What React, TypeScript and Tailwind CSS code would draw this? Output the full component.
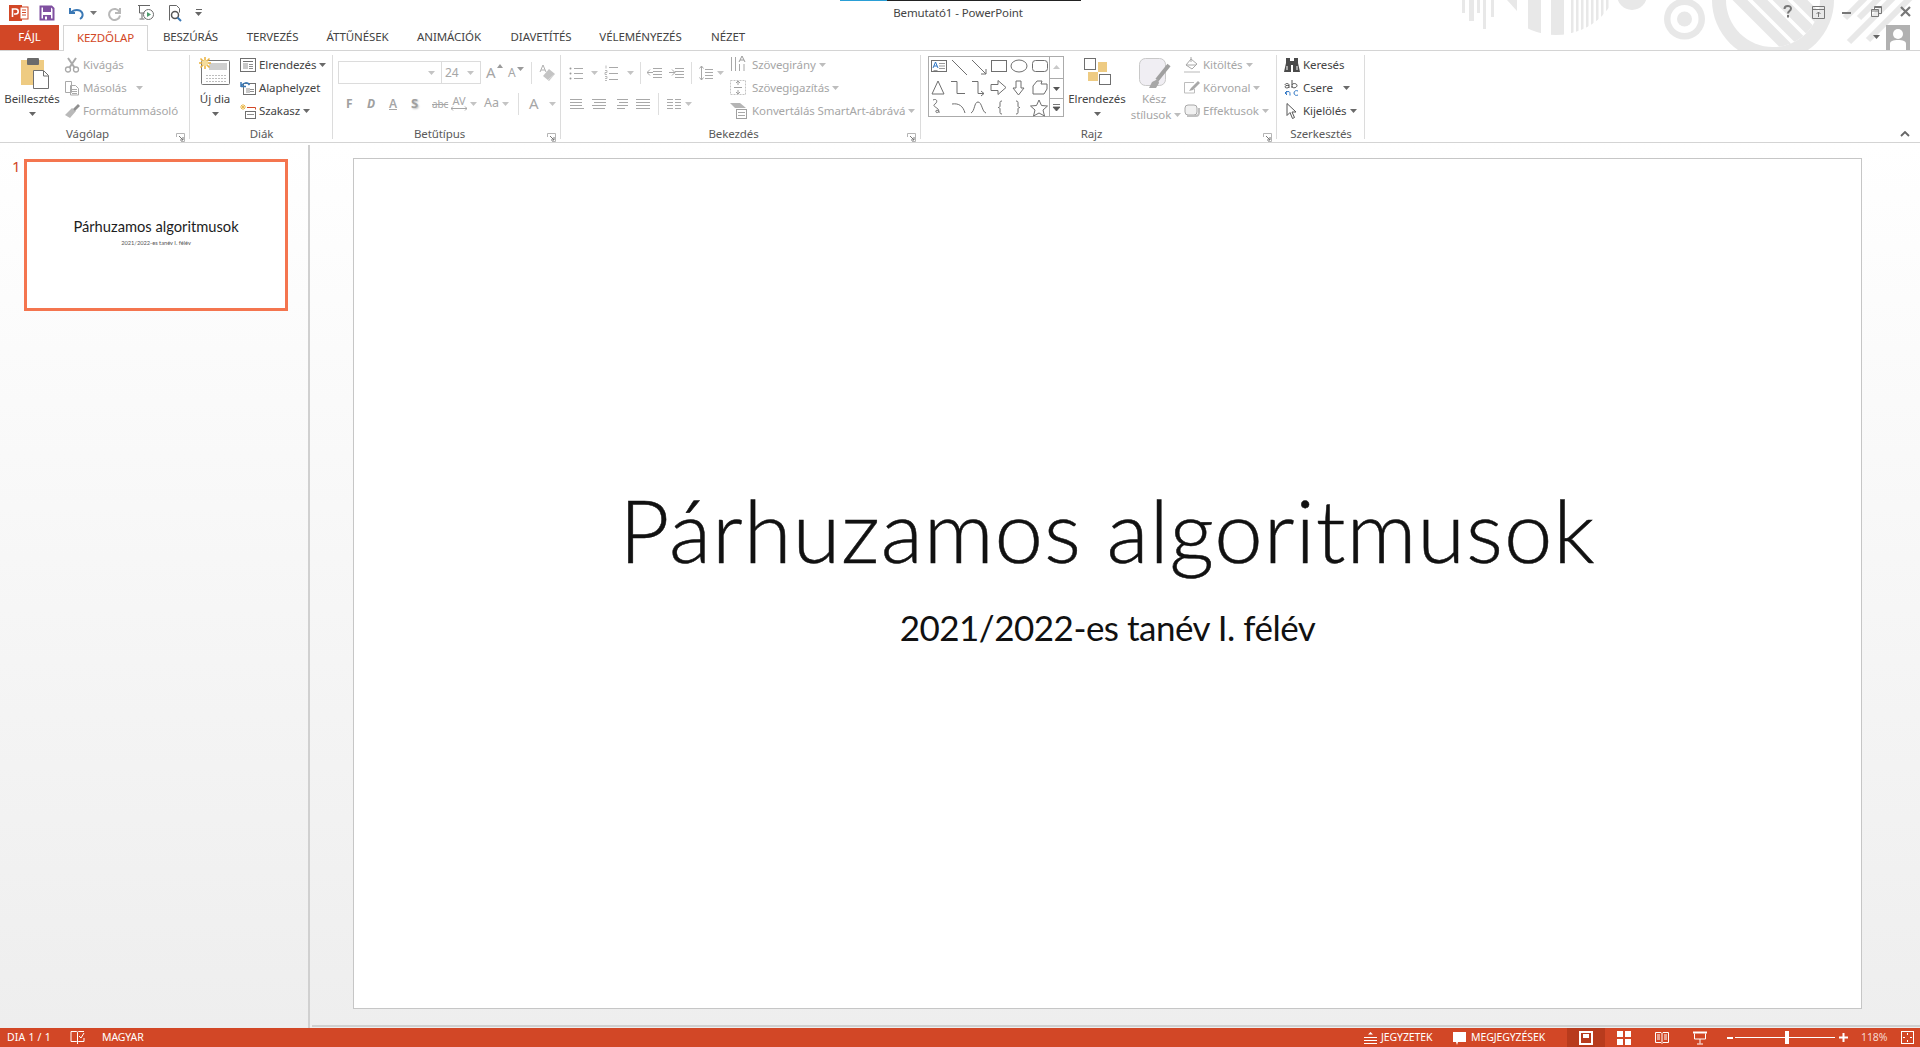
import type { ReactNode } from "react";

const GREY = "#a9a9a9";

function Caret({ color = "#8a8a8a" }: { color?: string }) {
  return (
    <svg width="7" height="4" viewBox="0 0 7 4" className="shrink-0">
      <path d="M0 0h7L3.5 4z" fill={color} />
    </svg>
  );
}

function Ico({ w = 16, h = 16, children }: { w?: number; h?: number; children: ReactNode }) {
  return (
    <svg width={w} height={h} viewBox={`0 0 ${w} ${h}`} fill="none" className="shrink-0">
      {children}
    </svg>
  );
}

function Row({
  icon,
  label,
  off,
  caret,
  gap = "w-[19px]",
  caretGap = "ml-[3px]",
}: {
  icon: ReactNode;
  label: string;
  off?: boolean;
  caret?: boolean;
  gap?: string;
  caretGap?: string;
}) {
  return (
    <div className={`flex h-[23px] items-center whitespace-nowrap ${off ? "text-[#a6a6a6]" : "text-[#444444]"}`}>
      <div className={`flex items-center shrink-0 ${gap}`}>{icon}</div>
      <span>{label}</span>
      {caret && <span className={caretGap}><Caret color={off ? "#bdbdbd" : "#6a6a6a"} /></span>}
    </div>
  );
}

function Launcher() {
  return (
    <svg width="9" height="9" viewBox="0 0 9 9" className="absolute right-[5px] bottom-[2px]">
      <path d="M.5 4V.5H8.5V8.5H5" stroke="#b5b5b5" fill="none" />
      <path d="M3 3l4 4M7 4v3H4" stroke="#777" fill="none" />
    </svg>
  );
}

function Group({ width, label, launcher, children }: { width: string; label: string; launcher?: boolean; children: ReactNode }) {
  return (
    <div className={`relative flex h-[93px] shrink-0 flex-col ${width}`}>
      <div className="flex h-[73px] pt-[2px]">{children}</div>
      <div className={`flex h-[19px] items-center justify-center text-[#5a5a5a] ${launcher ? "pr-[15px]" : ""}`}>{label}</div>
      {launcher && <Launcher />}
      <div className="absolute right-0 top-[4px] h-[84px] w-px bg-[#dcdcdc]" />
    </div>
  );
}

function Sep({ h = "h-[22px]" }: { h?: string }) {
  return <div className={`w-px bg-[#dedede] ${h}`} />;
}

function PaperLines({ x, w, ys, color = GREY }: { x: number; w: number; ys: number[]; color?: string }) {
  return <path d={ys.map((y) => `M${x} ${y}.5h${w}`).join("")} stroke={color} />;
}

function TitleDoodle() {
  const stripes = [1571, 1576, 1581, 1586, 1591, 1596, 1601, 1606];
  return (
    <svg width="1920" height="50" viewBox="0 0 1920 50" className="absolute left-0 top-0">
      <defs>
        <clipPath id="half">
          <circle cx="1556" cy="-30" r="65" />
        </clipPath>
        <clipPath id="inner">
          <circle cx="1773" cy="0" r="47" />
        </clipPath>
      </defs>
      <g fill="#e8e8e8">
        <rect x="1462" width="3" height="13" />
        <rect x="1469" width="5" height="21" />
        <rect x="1477" width="3" height="13" />
        <rect x="1483" width="3" height="29" />
        <rect x="1491" width="3" height="17" />
        <g clipPath="url(#half)">
          <path d="M1507 0h10v11z" />
          <rect x="1528" y="0" width="13" height="40" />
          <rect x="1551" y="0" width="13" height="40" />
          {stripes.map((x) => (
            <rect key={x} x={x} y="0" width="2.5" height="40" />
          ))}
        </g>
        <circle cx="1632" cy="-5" r="15" />
        <circle cx="1684.5" cy="19" r="20.5" />
        <circle cx="1684.5" cy="19" r="14" fill="#ffffff" />
        <circle cx="1684.5" cy="19" r="7.5" />
        <circle cx="1773" cy="0" r="61" />
        <circle cx="1773" cy="0" r="47" fill="#ffffff" />
        <g clipPath="url(#inner)" stroke="#e8e8e8" strokeWidth="10.5">
          <path d="M1734 -6L1790 50M1750 -10L1806 46M1766 -14L1822 42M1782 -18L1838 38" />
        </g>
      </g>
      <g stroke="#e8e8e8" strokeWidth="6">
        <path d="M1849 42L1900 -9M1868 40L1915 -7M1845 18L1866 -3M1859 18L1880 -3" />
      </g>
    </svg>
  );
}

function ShapesGallery() {
  const s = "#6f6f6f";
  return (
    <svg width="136" height="61" viewBox="0 0 136 61" fill="none" className="ml-[7px] mt-[3px] shrink-0">
      <rect x=".5" y=".5" width="135" height="60" stroke="#ababab" fill="#fff" />
      <path d="M121.5 .5v60M121.5 22.5h14M121.5 42.5h14" stroke="#ababab" />
      <path d="M125 13l3.5-4 3.5 4z" fill="#c9c9c9" />
      <path d="M125 31h7l-3.5 4z" fill="#555" />
      <path d="M125 48.5h7M125 51h7l-3.5 4z" stroke="#555" fill="#555" strokeWidth=".8" />
      <g stroke={s}>
        <rect x="3.5" y="4.5" width="15" height="11" />
        <path d="M11 7.5h6M11 10h6M11 12.5h6M5.5 14.5h4" stroke="#9a9a9a" />
        <path d="M5 12l2.5-6L10 12M6 10h3" stroke="#2f76c4" />
        <path d="M24 4l15 15M44 4l14 14M58 18v-5M58 18h-5" />
        <rect x="63.5" y="4.5" width="15" height="11" />
        <ellipse cx="91" cy="10" rx="8" ry="6" />
        <rect x="104.5" y="4.5" width="15" height="11" rx="3" />
        <path d="M4 38l6-13 6 13z" />
        <path d="M23 25.5h6v12h8M44 25.5h6v12h6M56 37.5l-3-2.5M56 37.5l-3 2.5" />
        <path d="M63 28.5h7v-4l8 7-8 7v-4h-7z" />
        <path d="M88 25h5v7h3l-5.500 7-5.500-7h3z" />
        <path d="M105 38v-8l4-5h5l-1 3h6v5l-3 5z" />
        <path d="M5 44c4-2 5 2 2 4-3 2 1 3 3 5s-1 5-2 3c-1-3 4-2 3 1" />
        <path d="M24 48c7-1 11 2 13 9" />
        <path d="M43 57c4-2 3-11 7-11s4 10 8 11" />
        <path d="M74 45c-2 0-2 1-2 2v3c0 1-1 1.500-2 1.500 1 0 2 .5 2 1.500v3c0 1 0 2 2 2M88 45c2 0 2 1 2 2v3c0 1 1 1.500 2 1.500-1 0-2 .5-2 1.500v3c0 1 0 2-2 2" />
        <path d="M111 44l2.500 5.500 6 .5-4.500 4 1.500 6-5.500-3-5.500 3 1.500-6-4.500-4 6-.5z" />
      </g>
    </svg>
  );
}

export default function App() {
  const tabX: [string, string][] = [
    ["BESZÚRÁS", "ml-[15px] w-[55px]"],
    ["TERVEZÉS", "ml-[29px] w-[51px]"],
    ["ÁTTŰNÉSEK", "ml-[29px] w-[61px]"],
    ["ANIMÁCIÓK", "ml-[28px] w-[66px]"],
    ["DIAVETÍTÉS", "ml-[30px] w-[58px]"],
    ["VÉLEMÉNYEZÉS", "ml-[29px] w-[83px]"],
    ["NÉZET", "ml-[28px] w-[36px]"],
  ];

  return (
    <div className="relative flex h-[1047px] w-[1920px] flex-col overflow-hidden bg-white font-['Noto_Sans',sans-serif] text-[11.5px] tracking-[-0.1px]">
      {/* Title bar */}
      <div className="relative h-[25px] shrink-0">
        <TitleDoodle />
        <div className="absolute left-[840px] top-0 h-px w-[47px] bg-[#2a9fd6]" />
        <div className="absolute left-[887px] top-0 h-px w-[194px] bg-[#222]" />
        <div className="relative flex h-[25px] items-center pl-[9px]">
          <Ico w={20} h={18}>
            <rect x="0" y="1" width="13" height="16" fill="#d24726" />
            <rect x="11" y="3" width="8" height="12" fill="#fff" stroke="#d24726" />
            <path d="M3.5 13V5h3.2a2.4 2.4 0 0 1 0 5H5" stroke="#fff" strokeWidth="1.6" />
            <path d="M13 6h4M13 8.5h4M13 11h4" stroke="#d24726" />
          </Ico>
          <div className="ml-[10px]">
            <Ico w={16} h={16}>
              <path d="M1.5 1.5h11l2 2v11h-13z" stroke="#7f4fa0" strokeWidth="2" />
              <rect x="4" y="2" width="8" height="5" fill="#7f4fa0" />
              <rect x="4" y="10" width="8" height="5" fill="#7f4fa0" />
              <rect x="6" y="11.5" width="2" height="3" fill="#fff" />
            </Ico>
          </div>
          <div className="ml-[13px] flex items-center gap-[4px]">
            <Ico w={18} h={16}>
              <path d="M2 3v5h5" stroke="#3a78b5" strokeWidth="2" />
              <path d="M3 7.5c3-3.5 9-3.5 11 0 1.300 2.500.3 5-2 6.500" stroke="#3a78b5" strokeWidth="2" />
            </Ico>
            <Caret color="#777" />
          </div>
          <div className="ml-[10px]">
            <Ico w={16} h={16}>
              <path d="M13 3v5H8" stroke="#b8b8b8" strokeWidth="2" />
              <path d="M12.5 7A5.5 5.5 0 1 0 13 10.5" stroke="#b8b8b8" strokeWidth="2" />
            </Ico>
          </div>
          <div className="ml-[14px]">
            <Ico w={18} h={17}>
              <path d="M1 1.5h12M2.5 2v7h5M5 9.5v5M2.5 15h5" stroke="#666" />
              <circle cx="11.5" cy="10.5" r="5" stroke="#6d6d6d" />
              <path d="M10 8v5l4-2.500z" fill="#4c9c6c" />
            </Ico>
          </div>
          <div className="ml-[12px]">
            <Ico w={16} h={18}>
              <path d="M2.5 16.5v-15h7l3 3v4" stroke="#666" />
              <circle cx="8" cy="11" r="3.5" stroke="#555" strokeWidth="1.5" />
              <path d="M10.5 13.5l3.5 3.5" stroke="#3a78b5" strokeWidth="2" />
            </Ico>
          </div>
          <div className="ml-[12px] flex flex-col items-center gap-[2px]">
            <div className="h-px w-[6px] bg-[#666]" />
            <Caret color="#666" />
          </div>
        </div>
        <div className="absolute left-[758px] top-[4px] w-[400px] text-center text-[#444444] text-[11.5px]">Bemutató1 - PowerPoint</div>
        {/* Window controls */}
        <svg width="140" height="25" viewBox="0 0 140 25" fill="none" className="absolute left-[1780px] top-0">
          <path d="M4.5 9c0-4 6.500-4 6.500-.5 0 2.500-3 2.500-3 5M8 15v2.500" stroke="#777" strokeWidth="2" />
          <path d="M32.5 6.5h12v12h-12zM32.5 9.5h12M38.5 17v-5M36.5 14l2-2 2 2" stroke="#777" />
          <path d="M62 13h9" stroke="#777" strokeWidth="2" />
          <path d="M94.5 9V6.5h7v7H99M91.5 9.5h7v7h-7zM91.5 11h7M94 7.5h8" stroke="#777" />
          <path d="M121 7l9 9M130 7l-9 9" stroke="#777" strokeWidth="2.2" />
        </svg>
        <div className="absolute left-[1873px] top-[35px]">
          <Caret color="#666" />
        </div>
        <svg width="24" height="25" viewBox="0 0 24 25" className="absolute left-[1886px] top-[25px] z-10">
          <rect width="24" height="25" fill="#b1b1b1" />
          <circle cx="12" cy="9" r="5" fill="#fff" />
          <path d="M4 25v-6c0-3 3-4 8-4s8 1 8 4v6z" fill="#fff" />
        </svg>
      </div>

      {/* Tabs */}
      <div className="relative z-[1] -mb-px flex h-[26px] shrink-0 items-start text-[11.5px] text-[#444444]">
        <div className="flex h-[25px] w-[59px] items-center justify-center bg-[#d24726] pb-px text-white">FÁJL</div>
        <div className="ml-[4px] flex h-[26px] w-[85px] items-center justify-center border border-b-0 border-[#d4d4d4] bg-white pb-[2px] text-[#d24726]">KEZDŐLAP</div>
        {tabX.map(([t, cls]) => (
          <div key={t} className={`flex h-[25px] items-center justify-center whitespace-nowrap pb-px ${cls}`}>
            {t}
          </div>
        ))}
      </div>

      {/* Ribbon */}
      <div className="relative flex h-[93px] shrink-0 border-y border-[#d4d4d4] bg-white leading-none">
        <Group width="w-[190px]" label="Vágólap" launcher>
          <div className="flex w-[64px] flex-col items-center text-[#444444]">
            <div className="ml-[6px] mt-[4px]">
              <Ico w={30} h={32}>
                <path d="M1 3h23v25H1z" fill="#eecb82" />
                <rect x="7" y="1" width="12" height="7" rx="1" fill="#6b6b6b" />
                <path d="M13.5 13.5h10l5 5v13h-15z" fill="#fff" stroke="#6f6f6f" />
                <path d="M23.5 14v5h5" stroke="#6f6f6f" />
              </Ico>
            </div>
            <div className="mt-[2px] h-[16px] leading-[16px]">Beillesztés</div>
            <div className="mt-[5px]"><Caret color="#666" /></div>
          </div>
          <div className="flex flex-col">
            <Row off label="Kivágás" icon={
              <Ico>
                <circle cx="4" cy="12.5" r="2.5" stroke={GREY} strokeWidth="1.3" />
                <circle cx="12" cy="12.5" r="2.5" stroke={GREY} strokeWidth="1.3" />
                <path d="M5.5 10.5L12 1M10.5 10.5L4 1" stroke={GREY} strokeWidth="2" />
              </Ico>
            } />
            <Row off caret caretGap="ml-[9px]" label="Másolás" icon={
              <Ico>
                <path d="M1.5 1.5h6v11h-6zM6.5 5.5h5l3 3v6.500h-8z" stroke={GREY} fill="#fff" />
                <PaperLines x={8} w={5} ys={[9, 11, 13]} />
              </Ico>
            } />
            <Row off label="Formátummásoló" icon={
              <Ico>
                <path d="M1 12l7-7 4 3-6 7z" fill="#b9b9b9" />
                <path d="M9 6l5-5 2 2-5 5z" fill="#8f8f8f" />
              </Ico>
            } />
          </div>
        </Group>

        <Group width="w-[143px]" label="Diák">
          <div className="flex w-[50px] flex-col items-center text-[#444444]">
            <div className="mt-[4px]">
              <Ico w={32} h={32}>
                <rect x="2.5" y="3.5" width="28" height="24" rx="1" stroke="#777" fill="#fff" />
                <rect x="10" y="6" width="18" height="7" fill="#cfcfcf" />
                <path d="M7 18.5h20M7 21.5h20M7 24.5h20" stroke="#bdbdbd" strokeDasharray="2 1" />
                <path d="M6 0v12M0 6h12M1.5 1.5l9 9M10.5 1.5l-9 9" stroke="#eab23e" strokeWidth="1.5" />
                <circle cx="6" cy="6" r="3" fill="#f5dc9c" />
              </Ico>
            </div>
            <div className="mt-[2px] h-[16px] leading-[16px]">Új dia</div>
            <div className="mt-[5px]"><Caret color="#666" /></div>
          </div>
          <div className="flex flex-col">
            <Row caret label="Elrendezés" icon={
              <Ico>
                <rect x=".5" y="1.5" width="15" height="13" stroke="#6f6f6f" />
                <path d="M3 4.5h10" stroke="#6f6f6f" />
                <rect x="3" y="6" width="5" height="6" fill="#c9c9c9" />
                <PaperLines x={9} w={4} ys={[7, 9, 11]} color="#8f8f8f" />
              </Ico>
            } />
            <Row label="Alaphelyzet" icon={
              <Ico>
                <rect x="3.5" y="3.5" width="12" height="11" stroke="#6f6f6f" />
                <rect x="6" y="8" width="4" height="5" fill="#c9c9c9" />
                <PaperLines x={10} w={4} ys={[9, 11]} color="#8f8f8f" />
                <path d="M1 7V2M1 6.5h5M1.5 6c2-4 6-4 8-1" stroke="#3a78b5" strokeWidth="1.5" />
              </Ico>
            } />
            <Row caret label="Szakasz" icon={
              <Ico>
                <path d="M3 1v6M0 4h6M1 2l4 4M5 2L1 6" stroke="#e9b94f" />
                <path d="M7 4.5h8.5M15.5 4.5v2" stroke="#d24726" />
                <rect x="5.5" y="8.5" width="10" height="7" stroke="#6f6f6f" />
                <path d="M7 11.5h7" stroke="#8f8f8f" />
              </Ico>
            } />
          </div>
        </Group>

        <Group width="w-[228px]" label="Betűtípus" launcher>
          <div className="ml-[5px] flex flex-col text-[#a6a6a6]">
            <div className="mt-[8px] flex h-[23px] items-center">
              <div className="flex h-[23px] w-[104px] items-center justify-end border border-[#dcdcdc] pr-[6px]"><Caret color="#c4c4c4" /></div>
              <div className="-ml-px flex h-[23px] w-[40px] items-center justify-between border border-[#dcdcdc] pl-[3px] pr-[6px] text-[12px]">24<Caret color="#c4c4c4" /></div>
              <span className="ml-[5px] flex w-[22px] items-start text-[15px]">A<span className="mt-[-1px] ml-[1px]"><svg width="6" height="4"><path d="M0 4l3-4 3 4z" fill="#9a9a9a" /></svg></span></span>
              <span className="flex w-[23px] items-start text-[12px]">A<span className="ml-[1px]"><Caret color="#9a9a9a" /></span></span>
              <Sep />
              <div className="ml-[7px]">
                <Ico w={18} h={18}>
                  <path d="M1 8l3-7 3 7M2 6h4" stroke="#b0b0b0" />
                  <path d="M4 12l6-7 6 5-6 7z" fill="#c4c4c4" />
                  <path d="M9 16l7-6" stroke="#e1e1e1" />
                </Ico>
              </div>
            </div>
            <div className="mt-[8px] flex h-[23px] items-center text-[12px]">
              <span className="ml-[8px] w-[21px] font-bold text-[#a0a0a0]">F</span>
              <span className="w-[22px] font-bold italic text-[#a0a0a0]">D</span>
              <span className="w-[22px] font-semibold underline text-[#a6a6a6]">A</span>
              <span className="w-[21px] text-[13px] font-bold text-[#9f9f9f] [text-shadow:1px_1px_2px_#bbb]">S</span>
              <span className="w-[19px] text-[10px] line-through">abc</span>
              <div className="flex w-[33px] items-center gap-[3px]">
                <span className="flex flex-col items-center text-[11px] leading-[10px]">AV<svg width="16" height="5"><path d="M0 2.5h16M2 .5l-2 2 2 2M14 .5l2 2-2 2" stroke="#a6a6a6" fill="none" /></svg></span>
                <Caret color="#c4c4c4" />
              </div>
              <span className="flex w-[34px] items-center gap-[3px] text-[12.5px]">Aa<Caret color="#c4c4c4" /></span>
              <Sep />
              <span className="ml-[10px] w-[20px] text-[15px]">A</span>
              <Caret color="#c4c4c4" />
            </div>
          </div>
        </Group>

        <Group width="w-[360px]" label="Bekezdés" launcher>
          <div className="ml-[8px] flex w-[161px] flex-col">
            <div className="mt-[8px] flex h-[23px] items-center">
              <Ico w={14} h={14}>
                <PaperLines x={5} w={9} ys={[2, 7, 12]} />
                <circle cx="1.5" cy="2.5" r="1" fill="#999" />
                <circle cx="1.5" cy="7.5" r="1" fill="#999" />
                <circle cx="1.5" cy="12.5" r="1" fill="#999" />
              </Ico>
              <span className="ml-[8px]"><Caret color="#c4c4c4" /></span>
              <span className="ml-[6px]">
                <Ico w={14} h={16}>
                  <PaperLines x={5} w={9} ys={[2, 8, 14]} />
                  <path d="M2 .5v3M1 5.5h2v2H1v2h2M1 11.5h2v2H1M1 15.5h2" stroke="#aaa" strokeWidth=".8" />
                </Ico>
              </span>
              <span className="ml-[9px]"><Caret color="#c4c4c4" /></span>
              <div className="ml-[6px]"><Sep /></div>
              <div className="ml-[6px]">
                <Ico w={15} h={12}>
                  <PaperLines x={6} w={9} ys={[1, 4, 7, 10]} />
                  <path d="M0 5.5h6M3 2.5l-3 3 3 3" stroke="#a8a8a8" />
                </Ico>
              </div>
              <div className="ml-[7px]">
                <Ico w={15} h={12}>
                  <PaperLines x={6} w={9} ys={[1, 4, 7, 10]} />
                  <path d="M0 5.5h6M3 2.5l3 3-3 3" stroke="#a8a8a8" />
                </Ico>
              </div>
              <div className="ml-[7px]"><Sep /></div>
              <div className="ml-[7px]">
                <Ico w={14} h={16}>
                  <PaperLines x={6} w={8} ys={[4, 7, 10, 13]} />
                  <path d="M2.5 1v14M.5 3.5l2-2.500 2 2.500M.5 12.5l2 2.500 2-2.500" stroke="#a8a8a8" />
                </Ico>
              </div>
              <span className="ml-[4px]"><Caret color="#c4c4c4" /></span>
            </div>
            <div className="mt-[8px] flex h-[23px] items-center pl-px">
              {[[0, 12, 0, 12, 0], [0, 14, 2, 12, 1], [3, 14, 5, 14, 3], [0, 14, 0, 14, 0]].map((l, i) => (
                <div key={i} className={i === 0 ? "" : "ml-[8px]"}>
                  <Ico w={14} h={12}>
                    <path d={`M${l[0]} 1.5h${l[1]}M${l[2]} 4.5h${l[3]}M${l[0]} 7.5h${l[1]}M${l[4]} 10.5h${14 - 2 * l[4]}`} stroke="#a8a8a8" />
                  </Ico>
                </div>
              ))}
              <div className="ml-[8px]"><Sep /></div>
              <div className="ml-[8px]">
                <Ico w={14} h={12}>
                  <path d="M0 1.5h6M8 1.5h6M0 4.5h6M8 4.5h6M0 7.5h6M8 7.5h6M0 10.5h6M8 10.5h6" stroke="#aaaaaa" />
                </Ico>
              </div>
              <span className="ml-[4px]"><Caret color="#c4c4c4" /></span>
            </div>
          </div>
          <div className="flex flex-col">
            <Row off caret gap="w-[22px]" label="Szövegirány" icon={
              <Ico w={18} h={17}>
                <path d="M1.5 1v14M5.5 1v14M9.5 8v7M14 8v7" stroke="#a8a8a8" />
                <path d="M9 6l3-6 3 6M10 4h4" stroke="#9a9a9a" />
              </Ico>
            } />
            <Row off caret gap="w-[22px]" label="Szövegigazítás" icon={
              <Ico w={18} h={17}>
                <rect x=".5" y="1.5" width="15" height="14" stroke="#c4c4c4" strokeDasharray="2 1" />
                <path d="M8 2v4M6 4l2-2 2 2M8 15v-4M6 13l2 2 2-2M4 8.5h8" stroke="#a0a0a0" />
              </Ico>
            } />
            <Row off caret gap="w-[22px]" label="Konvertálás SmartArt-ábrává" icon={
              <Ico w={18} h={16}>
                <path d="M0 0h10l6 5H5z" fill="#b5b5b5" />
                <rect x="6.5" y="6.5" width="10" height="9" stroke="#a0a0a0" fill="#fff" />
                <PaperLines x={8} w={7} ys={[9, 12]} />
              </Ico>
            } />
          </div>
        </Group>

        <Group width="w-[356px]" label="Rajz" launcher>
          <ShapesGallery />
          <div className="flex w-[66px] shrink-0 flex-col items-center text-[#444444]">
            <div className="mt-[5px]">
              <Ico w={27} h={27}>
                <rect x="14" y="4" width="9" height="10" fill="#eecb82" />
                <rect x="4" y="14" width="10" height="9" fill="#eecb82" />
                <rect x=".5" y=".5" width="11" height="11" fill="#fff" stroke="#6f6f6f" />
                <rect x="15.5" y="16.5" width="11" height="10" fill="#fff" stroke="#6f6f6f" />
              </Ico>
            </div>
            <div className="mt-[6px] h-[16px] leading-[16px]">Elrendezés</div>
            <div className="mt-[5px]"><Caret color="#666" /></div>
          </div>
          <div className="flex w-[52px] shrink-0 flex-col items-center text-[#a6a6a6]">
            <div className="mt-[4px] mr-[4px]">
              <Ico w={34} h={32}>
                <rect x="2.5" y="1.5" width="26" height="27" rx="6" fill="#f0eef3" stroke="#c9c9c9" />
                <path d="M32 8L20 23" stroke="#a0a0a0" strokeWidth="4" />
                <path d="M15 25l6-3 1 4-3 5h-7z" fill="#a8a8a8" />
              </Ico>
            </div>
            <div className="mt-[2px] mr-[4px] h-[16px] leading-[16px]">Kész</div>
            <div className="flex items-center gap-[3px] leading-[16px]">stílusok<Caret color="#bdbdbd" /></div>
          </div>
          <div className="ml-[2px] flex flex-col">
            <Row off caret label="Kitöltés" icon={
              <Ico>
                <path d="M2 8l5-6 6 5-5 5z" stroke="#a8a8a8" />
                <path d="M7 0v5M2 8h10" stroke="#a8a8a8" />
                <rect y="14" width="16" height="2" fill="#dcdcdc" />
              </Ico>
            } />
            <Row off caret label="Körvonal" icon={
              <Ico>
                <path d="M10 2.5H.5v10.500h10V9" stroke="#bdbdbd" />
                <path d="M5 11l2-3 7-7 2 2-7 7z" fill="#a8a8a8" />
              </Ico>
            } />
            <Row off caret label="Effektusok" icon={
              <Ico>
                <rect x="1" y="2" width="12" height="10" rx="3" fill="#f1f1f1" stroke="#a8a8a8" />
                <path d="M3 13h9c2 0 3-2 3-4V5" stroke="#c0c0c0" strokeWidth="2" />
              </Ico>
            } />
          </div>
        </Group>

        <Group width="w-[88px]" label="Szerkesztés">
          <div className="ml-[7px] flex flex-col">
            <Row gap="w-[19px]" label="Keresés" icon={
              <Ico>
                <path d="M2 1h4v3h4V1h4v5l2 9H9V8H7v7H0l2-9z" fill="#4a4a4a" />
                <path d="M3 9v4M13 9v4" stroke="#fff" />
              </Ico>
            } />
            <Row caret caretGap="ml-[10px]" gap="w-[19px]" label="Csere" icon={
              <Ico>
                <path d="M1 5c0-2 4-2 4 0v3M5 5.5C2 5 1 6 1 7s3 1.500 4 0M8 0v8M8 5c0-2 5-2 5 .5S8 9 8 6" stroke="#555" />
                <path d="M14 11c-2-1-4 0-4 2s2 3 4 2M6 15.5c0-3 0-4-2-4s-2 2-1 2.500M1 13l2-2M1 13l2 2" stroke="#2f76c4" />
              </Ico>
            } />
            <Row caret caretGap="ml-[3px]" gap="w-[19px]" label="Kijelölés" icon={
              <Ico w={14} h={16}>
                <path d="M3 .5v12l3-3 2.500 6 2-1-2.500-5.500h4z" stroke="#555" fill="#fff" />
              </Ico>
            } />
          </div>
        </Group>

        <svg width="10" height="6" viewBox="0 0 10 6" fill="none" className="absolute left-[1900px] top-[80px]">
          <path d="M1 5l4-4 4 4" stroke="#666" strokeWidth="1.8" />
        </svg>
      </div>

      {/* Workspace */}
      <div className="flex min-h-0 flex-1 bg-gradient-to-b from-white to-[#eeeeee]">
        <div className="relative h-full w-[310px] shrink-0 pl-[24px] pt-[16px]">
          <span className="absolute left-[12px] top-[14px] text-[15px] leading-[18px] text-[#d24726]">1</span>
          <div className="flex h-[152px] w-[264px] flex-col items-center border-[3px] border-[#f4754f] bg-white pt-[55px] font-['Lato',sans-serif] tracking-normal">
            <div className="text-[14.7px] leading-[18px] text-[#1d1d1d]">Párhuzamos algoritmusok</div>
            <div className="mt-[3px] text-[5.7px] leading-[9px] text-[#555]">2021/2022-es tanév I. félév</div>
          </div>
          <div className="absolute bottom-0 right-0 top-[2px] w-[2px] bg-[#d0d0d0]" />
        </div>
        <div className="flex min-w-0 flex-1 flex-col pl-[43px] pt-[15px]">
          <div className="flex h-[851px] w-[1509px] flex-col items-center border border-[#c6c6c6] bg-white pt-[321px] font-['Lato',sans-serif] tracking-normal text-[#111]">
            <div className="text-[87px] font-light leading-[100px] tracking-[0.9px] [-webkit-text-stroke:0.5px_#111]">Párhuzamos algoritmusok</div>
            <div className="mt-[23px] text-[35px] leading-[48px] tracking-[-0.5px]">2021/2022-es tanév I. félév</div>
          </div>
          <div className="ml-[-41px] mt-[16px] h-[2px] bg-[#d0d0d0]" />
        </div>
      </div>

      {/* Status bar */}
      <div className="flex h-[19px] shrink-0 items-center justify-between bg-[#d24726] text-[10.5px] text-white">
        <div className="flex items-center">
          <span className="ml-[7px] w-[63px] tracking-[0.2px]">DIA 1 / 1</span>
          <Ico w={15} h={15}>
            <path d="M1 1.5h5.5c1 0 1 1 1 1v10c0-1-1-1-1-1H1zM7.5 2.5c0-1 1-1 1-1H14M7.5 12.5s0-1 1-1H14V8M7.5 12.5V14" stroke="#fff" />
            <path d="M9 6l2 2 3-5" stroke="#fff" />
          </Ico>
          <span className="ml-[17px]">MAGYAR</span>
        </div>
        <div className="flex h-[19px] items-center">
          <Ico w={13} h={14}>
            <path d="M4 3.5l2.500-2.500 2.500 2.500z" fill="#fff" />
            <path d="M0 6.5h13M0 9.5h13M0 12.5h13" stroke="#fff" />
          </Ico>
          <span className="ml-[4px] w-[72px]">JEGYZETEK</span>
          <Ico w={13} h={14}>
            <path d="M0 1h13v10H5l-1 3-1-3H0z" fill="#fff" />
          </Ico>
          <span className="ml-[5px] w-[96px]">MEGJEGYZÉSEK</span>
          <div className="flex h-[19px] w-[38px] items-center justify-center bg-[#b83b1d]">
            <Ico w={14} h={14}>
              <rect x="1" y="1" width="12" height="12" stroke="#fff" strokeWidth="2" />
              <rect x="4" y="3" width="6" height="4" fill="#fff" />
            </Ico>
          </div>
          <div className="flex w-[38px] justify-center">
            <Ico w={14} h={14}>
              <path d="M0 0h6v6H0zM8 0h6v6H8zM0 8h6v6H0zM8 8h6v6H8z" fill="#fff" />
            </Ico>
          </div>
          <div className="flex w-[38px] justify-center">
            <Ico w={14} h={14}>
              <path d="M.5 1.5h5.500l1 1 1-1h5.500v10H8l-1 1-1-1H.5zM7 2.500v9M2 4h3M2 6h3M2 8h3M9 4h3M9 6h3M9 8h3" stroke="#fff" />
            </Ico>
          </div>
          <div className="flex w-[38px] justify-center">
            <Ico w={14} h={14}>
              <path d="M0 1.5h14" stroke="#fff" strokeWidth="2" />
              <path d="M1.5 2.5v5.500h11V2.500M7 8v4.500M4 13h6" stroke="#fff" />
            </Ico>
          </div>
          <div className="ml-[8px] h-[2px] w-[6px] bg-white" />
          <div className="relative ml-[2px] h-px w-[100px] bg-white">
            <div className="absolute left-[50px] top-[-6px] h-[13px] w-[4px] bg-white" />
          </div>
          <svg width="9" height="9" className="ml-[4px]"><path d="M0 4.5h9M4.5 0v9" stroke="#fff" strokeWidth="2" /></svg>
          <span className="ml-[13px] w-[39px] text-[#f6d9d0]">118%</span>
          <div className="mr-[6px] ml-[1px]">
            <Ico w={13} h={13}>
              <rect x=".5" y=".5" width="12" height="12" stroke="#fff" />
              <path d="M6.5 2v2M6.5 9v2M2 6.5h2M9 6.5h2" stroke="#fff" />
            </Ico>
          </div>
        </div>
      </div>
    </div>
  );
}
